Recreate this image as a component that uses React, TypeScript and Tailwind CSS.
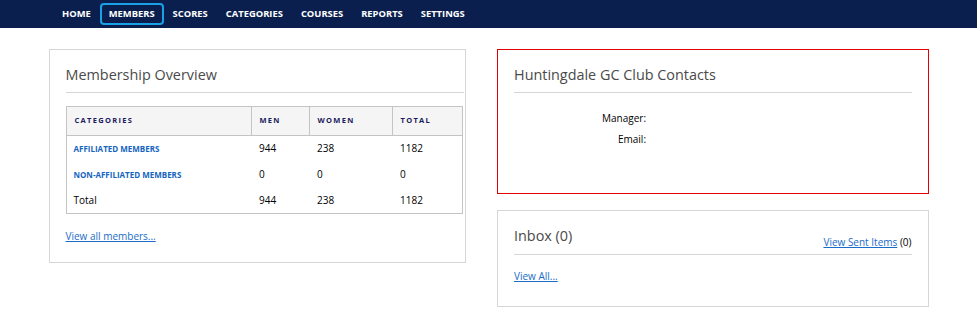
import React from "react"

const navItems = ["HOME", "MEMBERS", "SCORES", "CATEGORIES", "COURSES", "REPORTS", "SETTINGS"]

const rows = [
  { name: "AFFILIATED MEMBERS", men: 944, women: 238, total: 1182, link: true },
  { name: "NON-AFFILIATED MEMBERS", men: 0, women: 0, total: 0, link: true },
  { name: "Total", men: 944, women: 238, total: 1182, link: false },
]

function Card({ className, children }: { className?: string; children: React.ReactNode }) {
  return <div className={`border bg-white px-4 ${className}`}>{children}</div>
}

export default function App() {
  return (
    <div className="min-h-[331px] bg-white text-[10px] text-black" style={{ fontFamily: '"Open Sans", "Liberation Sans", sans-serif' }}>
      {/* top nav */}
      <nav className="h-[28px] bg-[#0b1f4f]">
        <ul className="flex h-full items-center pl-[53px]">
          {navItems.map((item) => (
            <li key={item}>
              <a
                className={`block rounded-[4px] text-[9.4px] font-bold leading-[18px] text-white ${
                  item === "MEMBERS" ? "border-2 border-[#19a0e6] px-[7px]" : "px-[9px]"
                }`}
              >
                {item}
              </a>
            </li>
          ))}
        </ul>
      </nav>

      <div className="mx-auto mt-[21px] flex w-[880px] gap-[31px]">
        {/* membership overview */}
        <Card className="h-[214px] w-[418px] border-[#d6d6d6] pl-[16px] pr-[1px]">
          <h2 className="mt-[15px] border-b border-[#d6d6d6] pb-[7px] text-[14.4px] leading-[20px] text-[#4a4a4a]">
            Membership Overview
          </h2>
          <table className="mt-[13px] w-[397px] border-collapse border border-[#c4c4c4]">
            <thead>
              <tr className="h-[29px] bg-[#f5f5f5] text-left text-[7.5px] font-extrabold tracking-[1.3px] text-[#1b1b5e]">
                <th className="w-[185px] border border-[#c4c4c4] pl-[8px]">CATEGORIES</th>
                <th className="w-[58px] border border-[#c4c4c4] pl-[8px]">MEN</th>
                <th className="w-[83px] border border-[#c4c4c4] pl-[8px]">WOMEN</th>
                <th className="border border-[#c4c4c4] pl-[8px]">TOTAL</th>
              </tr>
            </thead>
            <tbody>
              {rows.map((r) => (
                <tr key={r.name} className="h-[26px]">
                  <td className="pl-[7px]">
                    {r.link ? (
                      <a className="text-[8px] font-bold text-[#1565c0]">{r.name}</a>
                    ) : (
                      <span className="text-[10px]">{r.name}</span>
                    )}
                  </td>
                  <td className="pl-[8px]">{r.men}</td>
                  <td className="pl-[8px]">{r.women}</td>
                  <td className="pl-[8px]">{r.total}</td>
                </tr>
              ))}
            </tbody>
          </table>
          <a className="mt-[15px] block text-[10px] text-[#1a6cc8] underline">View all members...</a>
        </Card>

        {/* right column */}
        <div className="flex w-[432px] flex-col gap-[16px]">
          <Card className="h-[145px] border-[#e30000]">
            <h2 className="mt-[15px] border-b border-[#d6d6d6] pb-[7px] text-[14.4px] leading-[20px] text-[#4a4a4a]">
              Huntingdale GC Club Contacts
            </h2>
            <div className="mt-[18px] grid grid-cols-[132px_1fr] gap-y-[7px] leading-[14px]">
              <span className="text-right">Manager:</span>
              <span></span>
              <span className="text-right">Email:</span>
              <span></span>
            </div>
          </Card>

          <Card className="h-[97px] border-[#d6d6d6]">
            <div className="mt-[15px] flex items-end justify-between border-b border-[#d6d6d6] pb-[8px]">
              <h2 className="text-[14.4px] leading-[20px] text-[#4a4a4a]">Inbox (0)</h2>
              <span className="-mb-[3px] leading-[14px]">
                <a className="text-[#1a6cc8] underline">View Sent Items</a> (0)
              </span>
            </div>
            <a className="mt-[14px] block text-[10px] text-[#1a6cc8] underline">View All...</a>
          </Card>
        </div>
      </div>
    </div>
  )
}
